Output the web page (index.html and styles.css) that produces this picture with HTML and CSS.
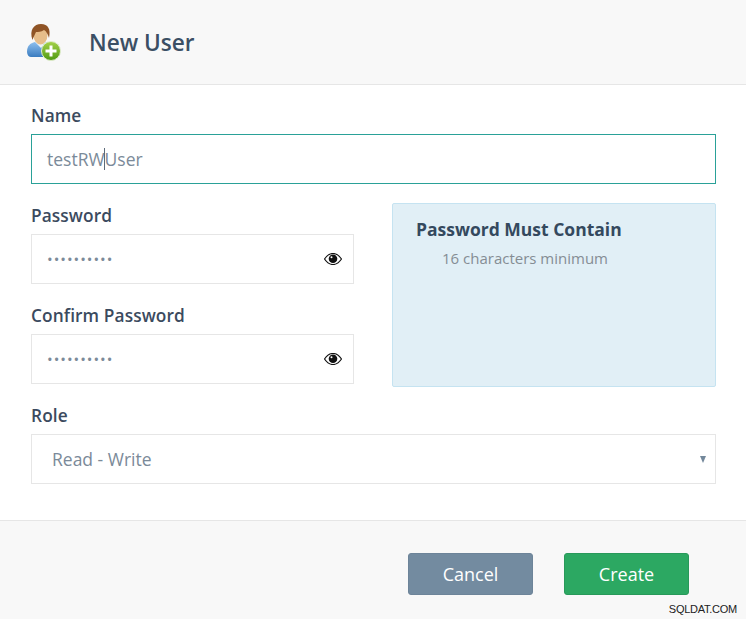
FILE: index.html
```html
<!DOCTYPE html>
<html lang="en">
<head>
    <meta charset="UTF-8">
    <title>New User</title>
    <link rel="stylesheet" href="styles.css">
</head>
<body>

<div class="dialog">
    <!-- Header -->
    <div class="header">
        <svg class="user-icon" width="36" height="40" viewBox="0 0 36 38">
            <defs>
                <linearGradient id="shirt" x1="0" y1="0" x2="0" y2="1">
                    <stop offset="0" stop-color="#8fc0ee"/>
                    <stop offset="1" stop-color="#3a7cc0"/>
                </linearGradient>
                <linearGradient id="plus" x1="0" y1="0" x2="0" y2="1">
                    <stop offset="0" stop-color="#a5d24a"/>
                    <stop offset="1" stop-color="#4f9a12"/>
                </linearGradient>
            </defs>
            <path d="M1 28c0-6 3-9 8-10h10c6 1 9 4 9 10 0 3-2 5-4 5H5c-2 0-4-2-4-5z" fill="url(#shirt)"/>
            <path d="M9 18l6 6 5-6z" fill="#eef3f6"/>
            <ellipse cx="14.500" cy="11" rx="7" ry="9.500" fill="#e6bd8a"/>
            <path d="M6.500 16C3 6 8 0 15 0c7 0 10 5 8 14-1-4-3-7-5-8-3 2-6 2-8 2-1 2-2.500 5-3.500 8z" fill="#8f5426"/>
            <circle cx="25" cy="27" r="9.500" fill="url(#plus)" stroke="#dfeccb" stroke-width="1"/>
            <path d="M23.500 21.500h3v4h4v3h-4v4h-3v-4h-4v-3h4z" fill="#fff"/>
        </svg>
        <h1>New User</h1>
    </div>

    <!-- Form -->
    <div class="form-section">
        <div class="field">
            <label>Name</label>
            <div class="input input-active">testRW<span class="caret"></span>User</div>
        </div>

        <div class="password-row">
            <div class="password-fields">
                <div class="field">
                    <label>Password</label>
                    <div class="input input-password">
                        <span class="dots">••••••••••</span>
                        <svg class="eye" width="18" height="12" viewBox="0 0 18 12">
                            <path d="M.5 6C3 2.300 5.800.5 9 .5s6 1.800 8.500 5.500C15 9.700 12.200 11.500 9 11.500S3 9.700.5 6z" fill="#fff" stroke="#111" stroke-width="1.200"/>
                            <circle cx="9" cy="5.800" r="4.300" fill="#111"/>
                            <circle cx="7.500" cy="4.200" r="1" fill="#fff"/>
                        </svg>
                    </div>
                </div>
                <div class="field">
                    <label>Confirm Password</label>
                    <div class="input input-password">
                        <span class="dots">••••••••••</span>
                        <svg class="eye" width="18" height="12" viewBox="0 0 18 12">
                            <path d="M.5 6C3 2.300 5.800.5 9 .5s6 1.800 8.500 5.500C15 9.700 12.200 11.500 9 11.500S3 9.700.5 6z" fill="#fff" stroke="#111" stroke-width="1.200"/>
                            <circle cx="9" cy="5.800" r="4.300" fill="#111"/>
                            <circle cx="7.500" cy="4.200" r="1" fill="#fff"/>
                        </svg>
                    </div>
                </div>
            </div>
            <div class="password-info">
                <h2>Password Must Contain</h2>
                <p>16 characters minimum</p>
            </div>
        </div>

        <div class="field">
            <label>Role</label>
            <div class="input input-select">
                <span>Read - Write</span>
                <span class="arrow"></span>
            </div>
        </div>
    </div>

    <!-- Footer -->
    <div class="footer">
        <button class="btn btn-cancel">Cancel</button>
        <button class="btn btn-create">Create</button>
        <span class="watermark">SQLDAT.COM</span>
    </div>
</div>

</body>
</html>
```

FILE: styles.css
```css
/* Global Reset */
*, *::before, *::after {
    margin: 0;
    padding: 0;
    box-sizing: border-box;
}

body {
    font-family: 'Open Sans', sans-serif;
    background-color: #fff;
    color: #34495e;
}

.dialog {
    width: 746px;
    height: 619px;
    display: flex;
    flex-direction: column;
    overflow: hidden;
}

/* Header */
.header {
    height: 85px;
    display: flex;
    align-items: center;
    padding: 0 0 0 26px;
    background-color: #f8f8f8;
    border-bottom: 1px solid #e6e6e6;
}

.user-icon {
    margin-right: 27px;
    margin-top: 2px;
}

.header h1 {
    font-size: 22.600px;
    font-weight: 600;
    line-height: 32px;
    margin-top: 1px;
    color: #3b4f64;
}

/* Form */
.form-section {
    flex: 1;
    padding: 18px 30px 0 31px;
}

.field {
    height: 100px;
}

.field label {
    display: block;
    height: 31px;
    font-size: 17.300px;
    font-weight: 600;
    line-height: 26px;
    letter-spacing: 0.100px;
    color: #3b4a5e;
}

.input {
    height: 50px;
    display: flex;
    align-items: center;
    padding: 0 15px;
    background-color: #fff;
    border: 1px solid #e6e6e6;
    font-size: 17.500px;
    color: #7b8a99;
}

.input-active {
    border-color: #2aa198;
}

.caret {
    display: inline-block;
    width: 1px;
    height: 22px;
    margin-left: -1px;
    background-color: #5c6b7a;
}

.input-password {
    justify-content: space-between;
    padding-right: 11px;
}

.dots {
    font-size: 15px;
    letter-spacing: 1px;
}

.eye {
    display: block;
}

.password-row {
    display: flex;
    justify-content: space-between;
}

.password-fields {
    width: 323px;
}

.password-info {
    width: 324px;
    height: 184px;
    padding: 12px 23px;
    background-color: #e1eff6;
    border: 1px solid #c5e3f1;
    border-radius: 2px;
}

.password-info h2 {
    font-size: 17.500px;
    font-weight: 700;
    line-height: 26px;
}

.password-info p {
    padding-left: 26px;
    margin-top: 5px;
    font-size: 15px;
    line-height: 22px;
    color: #858d94;
}

.input-select {
    justify-content: space-between;
    padding: 0 9px 0 20px;
    font-size: 17.500px;
}

.arrow {
    width: 0;
    height: 0;
    border-left: 3.500px solid transparent;
    border-right: 3.500px solid transparent;
    border-top: 7px solid #73889b;
}

/* Footer */
.footer {
    height: 99px;
    position: relative;
    display: flex;
    justify-content: flex-end;
    gap: 31px;
    padding: 32px 57px 0 0;
    background-color: #f8f8f8;
    border-top: 1px solid #e6e6e6;
}

.btn {
    width: 125px;
    height: 42px;
    font-family: inherit;
    font-size: 18px;
    color: #fff;
    border-radius: 3px;
    cursor: pointer;
}

.btn-cancel {
    background-color: #738ba0;
    border: 1px solid #6d8499;
}

.btn-create {
    background-color: #2ca862;
    border: 1px solid #28995a;
}

.watermark {
    position: absolute;
    right: 9px;
    bottom: 3px;
    font-family: 'Liberation Sans', Arial, sans-serif;
    font-size: 11px;
    letter-spacing: -0.250px;
    line-height: 14px;
    color: #222;
}
```
